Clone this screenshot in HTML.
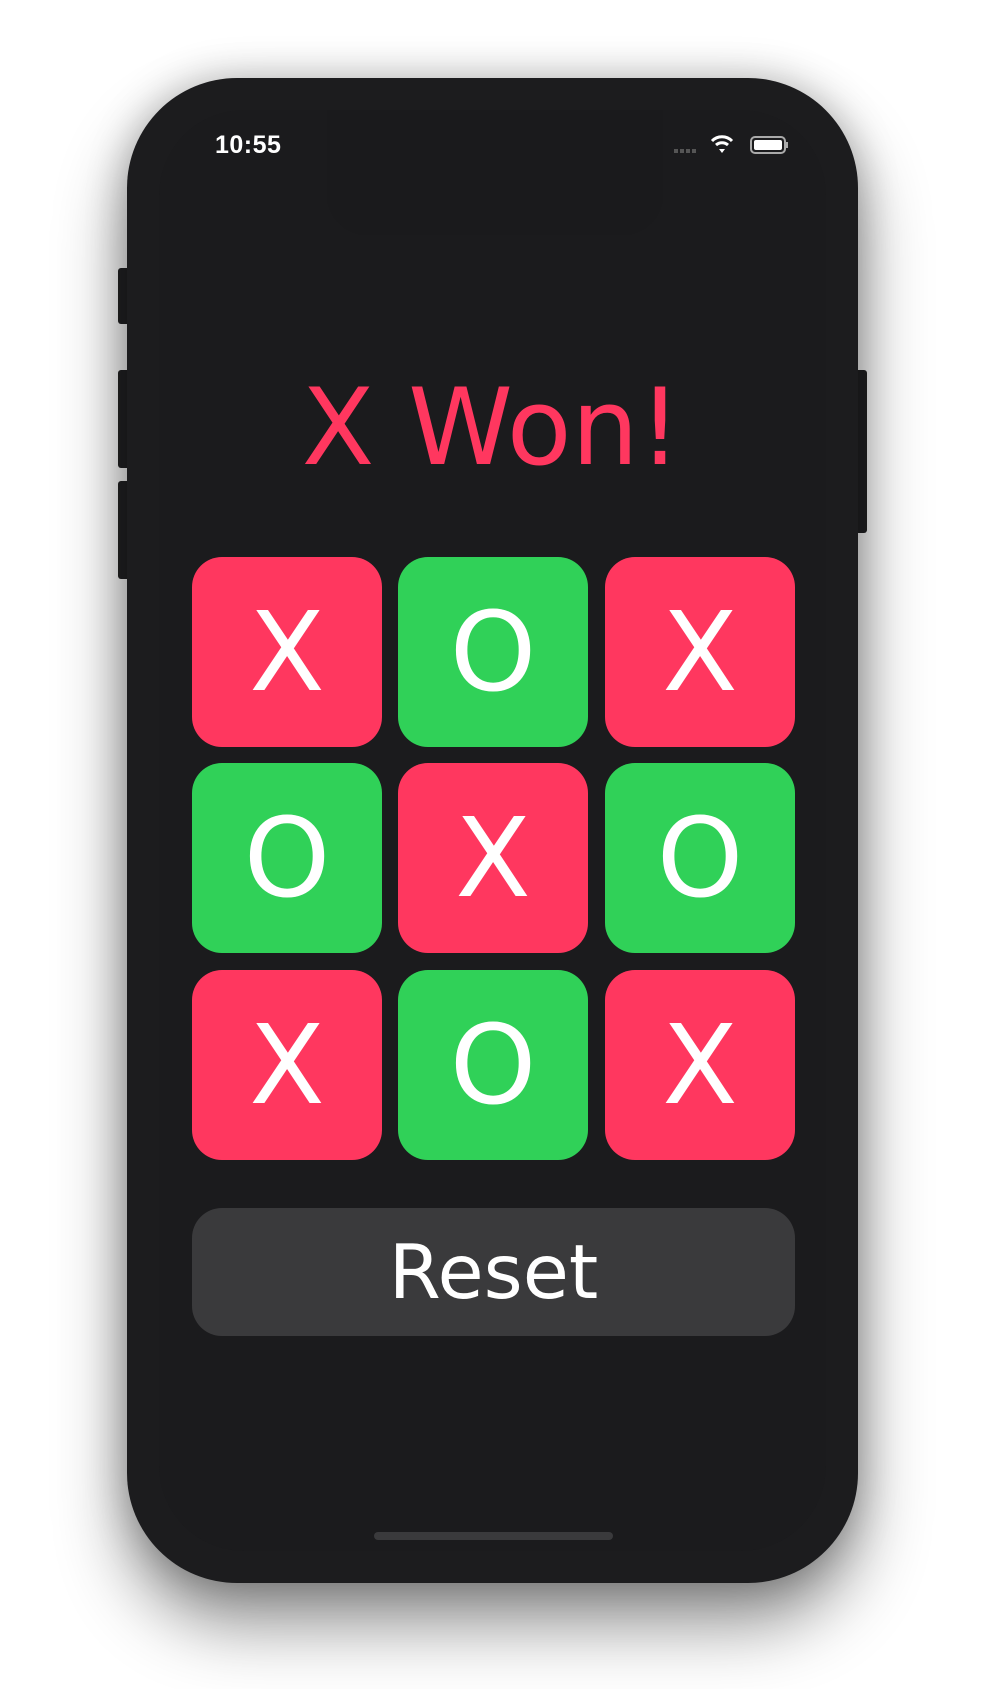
<!DOCTYPE html>
<html><head><style>
html,body{margin:0;padding:0;background:#fff;}
body{width:983px;height:1689px;position:relative;overflow:hidden;font-family:"Liberation Sans",sans-serif;}
.phone{position:absolute;left:127px;top:78px;width:731px;height:1505px;background:#1c1c1e;border-radius:110px;box-shadow:0 40px 70px rgba(0,0,0,0.45),0 0 40px rgba(0,0,0,0.25);}
.screen{position:absolute;left:32px;top:32px;right:32px;bottom:32px;border-radius:85px;background:#1b1b1d;}
.notch{position:absolute;left:200px;top:32px;width:336px;height:125px;background:#1a1a1c;border-radius:0 0 40px 40px;}
.btn{position:absolute;background:#232325;border-radius:3px;}
.time{position:absolute;left:215px;top:131px;color:#fff;font-size:25px;font-weight:bold;letter-spacing:0.5px;}
.title{position:absolute;left:0;width:983px;top:368px;text-align:center;color:#ff375f;font-family:"DejaVu Sans",sans-serif;font-size:106px;line-height:120px;}
.tile{position:absolute;width:190px;height:190px;border-radius:30px;color:#fff;font-family:"DejaVu Sans",sans-serif;font-size:110px;line-height:190px;text-align:center;}
.r{background:#ff375f}.g{background:#30d158}
.reset{position:absolute;left:192px;top:1208px;width:603px;height:128px;background:#3a3a3c;border-radius:30px;color:#fff;font-family:"DejaVu Sans",sans-serif;font-size:75px;line-height:128px;text-align:center;}
.home{position:absolute;left:374px;top:1532px;width:239px;height:8px;border-radius:4px;background:#3a3a3c;}
</style></head><body>
<div class="btn" style="left:118px;top:268px;width:12px;height:56px"></div>
<div class="btn" style="left:118px;top:370px;width:12px;height:98px"></div>
<div class="btn" style="left:118px;top:481px;width:12px;height:98px"></div>
<div class="btn" style="left:855px;top:370px;width:12px;height:163px"></div>
<div class="phone"><div class="screen"></div><div class="notch"></div></div>
<div class="time">10:55</div>
<svg style="position:absolute;left:672px;top:133px" width="120" height="24" viewBox="0 0 120 24">
<g fill="#555"><rect x="2" y="16" width="4" height="4"/><rect x="8" y="16" width="4" height="4"/><rect x="14" y="16" width="4" height="4"/><rect x="20" y="16" width="4" height="4"/></g>
<path d="M40 8 A14 14 0 0 1 60 8" stroke="#fff" stroke-width="3" fill="none"/>
<path d="M44 12 A9 9 0 0 1 56 12" stroke="#fff" stroke-width="3" fill="none"/>
<path d="M47 16 L50 20 L53 16 Z" fill="#fff"/>
<rect x="79" y="4" width="34" height="16" rx="4" fill="none" stroke="#aaa" stroke-width="2"/>
<rect x="82" y="7" width="28" height="10" rx="2" fill="#fff"/>
<rect x="114" y="9" width="2" height="6" fill="#aaa"/>
</svg>
<div class="title">X Won!</div>
<div class="tile r" style="left:192px;top:557px">X</div>
<div class="tile g" style="left:398px;top:557px">O</div>
<div class="tile r" style="left:605px;top:557px">X</div>
<div class="tile g" style="left:192px;top:763px">O</div>
<div class="tile r" style="left:398px;top:763px">X</div>
<div class="tile g" style="left:605px;top:763px">O</div>
<div class="tile r" style="left:192px;top:970px">X</div>
<div class="tile g" style="left:398px;top:970px">O</div>
<div class="tile r" style="left:605px;top:970px">X</div>
<div class="reset">Reset</div>
<div class="home"></div>
</body></html>
